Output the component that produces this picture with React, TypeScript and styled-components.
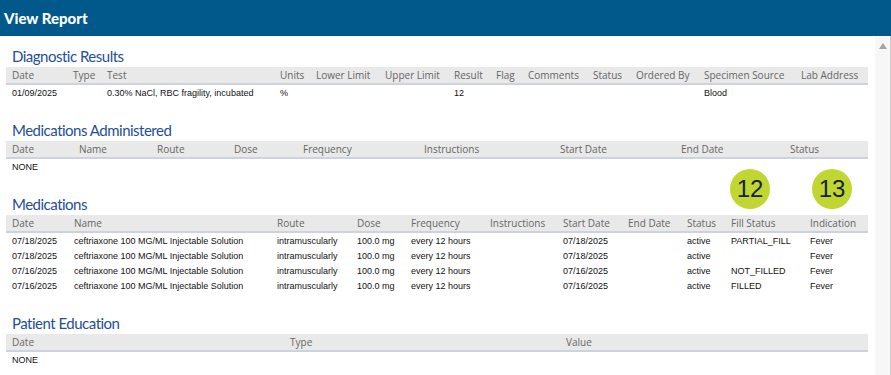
import React from "react";
import styled, { createGlobalStyle } from "styled-components";

const GlobalStyle = createGlobalStyle`
  html, body {
    margin: 0;
    padding: 0;
    background: #fff;
    overflow: hidden;
  }
`;

const Page = styled.div`
  width: 891px;
  height: 375px;
  display: flex;
  flex-direction: column;
  overflow: hidden;
`;

const TopBar = styled.div`
  height: 36px;
  flex-shrink: 0;
  background: #00588b;
  display: flex;
  align-items: center;
  padding-left: 4px;
`;

const TopTitle = styled.h1`
  margin: 0;
  color: #fff;
  font-family: Lato, "Open Sans", sans-serif;
  font-weight: 900;
  font-size: 15px;
`;

const Body = styled.div`
  flex: 1;
  display: flex;
  min-height: 0;
`;

const Content = styled.div`
  position: relative;
  flex: 1;
  padding: 10px 7px 0 6px;
`;

const ScrollTrack = styled.div`
  width: 15px;
  background: #f7f7f7;
  border-right: 1px solid #cdcdcd;
  display: flex;
  justify-content: center;
  padding-top: 7px;
`;

const ScrollArrow = styled.div`
  width: 0;
  height: 0;
  border-left: 4px solid transparent;
  border-right: 4px solid transparent;
  border-bottom: 6px solid #a3a3a3;
`;

const Section = styled.section`
  margin-bottom: 20px;
`;

const SectionTitle = styled.h2`
  margin: 0;
  padding-left: 6px;
  height: 21px;
  line-height: 20px;
  color: #1e4f97;
  font-family: Lato, "Open Sans", sans-serif;
  font-weight: 400;
  font-size: 15px;
  letter-spacing: -0.5px;
`;

const Table = styled.table`
  width: 100%;
  table-layout: fixed;
  border-collapse: collapse;
`;

const HeadCell = styled.th`
  text-align: left;
  font-weight: 400;
  background: #e9e9e9;
  border-bottom: 2px solid #cdd2db;
  color: #666;
  font-family: "Open Sans", Lato, sans-serif;
  font-size: 10px;
  height: 16px;
  padding: 0 0 0 6px;
  white-space: nowrap;
  overflow: hidden;
`;

const Cell = styled.td`
  font-family: "Liberation Sans", Arial, sans-serif;
  font-size: 9px;
  color: #111;
  height: 15px;
  padding: 0 0 0 6px;
  white-space: nowrap;
  overflow: hidden;
`;

const Badge = styled.div<{ $left: number }>`
  position: absolute;
  top: 133px;
  left: ${(p) => p.$left}px;
  width: 40px;
  height: 40px;
  border-radius: 50%;
  background: #c1d630;
  color: #15233f;
  font-family: "Liberation Sans", Arial, sans-serif;
  font-size: 24px;
  display: flex;
  align-items: center;
  justify-content: center;
`;

type Column = { label: string; width?: number };

type SectionData = {
  title: string;
  columns: Column[];
  rows: string[][] | null;
};

const sections: SectionData[] = [
  {
    title: "Diagnostic Results",
    columns: [
      { label: "Date", width: 61 },
      { label: "Type", width: 34 },
      { label: "Test", width: 173 },
      { label: "Units", width: 36 },
      { label: "Lower Limit", width: 69 },
      { label: "Upper Limit", width: 69 },
      { label: "Result", width: 42 },
      { label: "Flag", width: 32 },
      { label: "Comments", width: 65 },
      { label: "Status", width: 43 },
      { label: "Ordered By", width: 68 },
      { label: "Specimen Source", width: 97 },
      { label: "Lab Address" },
    ],
    rows: [["01/09/2025", "", "0.30% NaCl, RBC fragility, incubated", "%", "", "", "12", "", "", "", "", "Blood", ""]],
  },
  {
    title: "Medications Administered",
    columns: [
      { label: "Date", width: 67 },
      { label: "Name", width: 78 },
      { label: "Route", width: 77 },
      { label: "Dose", width: 69 },
      { label: "Frequency", width: 121 },
      { label: "Instructions", width: 136 },
      { label: "Start Date", width: 121 },
      { label: "End Date", width: 109 },
      { label: "Status" },
    ],
    rows: null,
  },
  {
    title: "Medications",
    columns: [
      { label: "Date", width: 62 },
      { label: "Name", width: 203 },
      { label: "Route", width: 80 },
      { label: "Dose", width: 54 },
      { label: "Frequency", width: 79 },
      { label: "Instructions", width: 73 },
      { label: "Start Date", width: 65 },
      { label: "End Date", width: 59 },
      { label: "Status", width: 44 },
      { label: "Fill Status", width: 79 },
      { label: "Indication" },
    ],
    rows: [
      ["07/18/2025", "ceftriaxone 100 MG/ML Injectable Solution", "intramuscularly", "100.0 mg", "every 12 hours", "", "07/18/2025", "", "active", "PARTIAL_FILL", "Fever"],
      ["07/18/2025", "ceftriaxone 100 MG/ML Injectable Solution", "intramuscularly", "100.0 mg", "every 12 hours", "", "07/18/2025", "", "active", "", "Fever"],
      ["07/16/2025", "ceftriaxone 100 MG/ML Injectable Solution", "intramuscularly", "100.0 mg", "every 12 hours", "", "07/16/2025", "", "active", "NOT_FILLED", "Fever"],
      ["07/16/2025", "ceftriaxone 100 MG/ML Injectable Solution", "intramuscularly", "100.0 mg", "every 12 hours", "", "07/16/2025", "", "active", "FILLED", "Fever"],
    ],
  },
  {
    title: "Patient Education",
    columns: [
      { label: "Date", width: 278 },
      { label: "Type", width: 276 },
      { label: "Value" },
    ],
    rows: null,
  },
];

const ReportSection = ({ data }: { data: SectionData }) => (
  <Section>
    <SectionTitle>{data.title}</SectionTitle>
    <Table>
      <colgroup>
        {data.columns.map((c, i) => (
          <col key={i} style={c.width ? { width: c.width } : undefined} />
        ))}
      </colgroup>
      <thead>
        <tr>
          {data.columns.map((c, i) => (
            <HeadCell key={i}>{c.label}</HeadCell>
          ))}
        </tr>
      </thead>
      <tbody>
        {data.rows ? (
          data.rows.map((row, r) => (
            <tr key={r}>
              {row.map((v, i) => (
                <Cell key={i}>{v}</Cell>
              ))}
            </tr>
          ))
        ) : (
          <tr>
            <Cell colSpan={data.columns.length}>NONE</Cell>
          </tr>
        )}
      </tbody>
    </Table>
  </Section>
);

export default function App() {
  return (
    <Page>
      <GlobalStyle />
      <TopBar>
        <TopTitle>View Report</TopTitle>
      </TopBar>
      <Body>
        <Content>
          {sections.map((s) => (
            <ReportSection key={s.title} data={s} />
          ))}
          <Badge $left={730}>12</Badge>
          <Badge $left={812}>13</Badge>
        </Content>
        <ScrollTrack>
          <ScrollArrow />
        </ScrollTrack>
      </Body>
    </Page>
  );
}
